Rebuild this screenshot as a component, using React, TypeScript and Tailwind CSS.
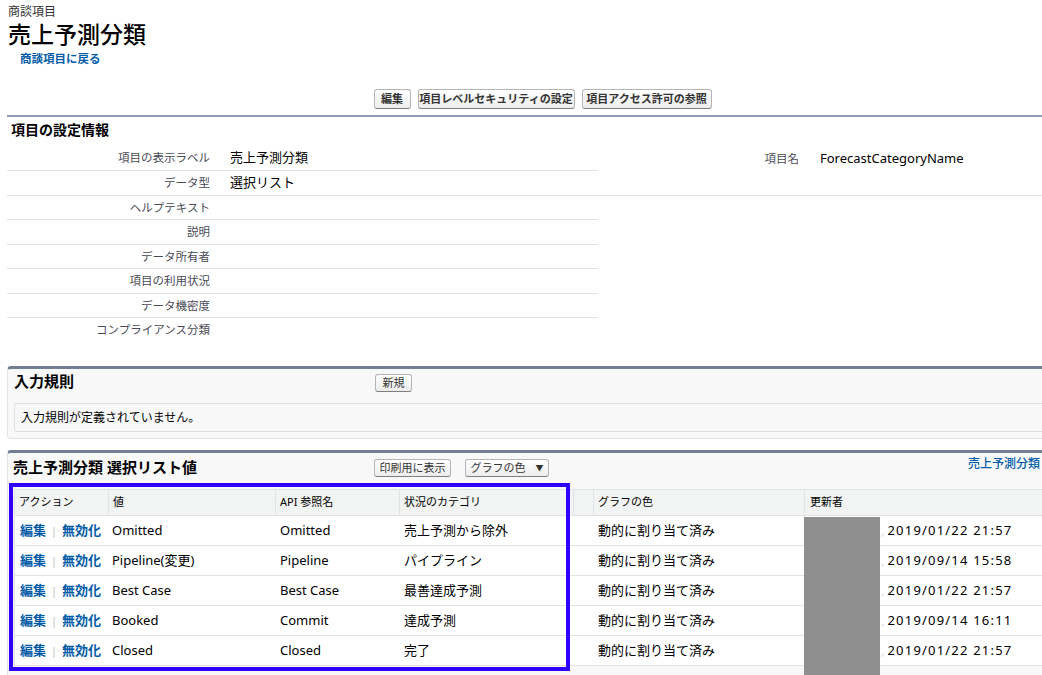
import React, { FC } from "react";

interface DetailRowProps {
  label: string;
  value?: string;
  height: string;
  border?: boolean;
}

const DetailRow: FC<DetailRowProps> = ({ label, value, height, border }) => {
  return (
    <div
      className={`flex items-center w-[591px] ${height} ${
        border ? "border-b border-[#e3e3e3]" : ""
      }`}
    >
      <div className="w-[213px] pr-[10px] text-right text-[11.5px] text-[#4a4a56]">
        {label}
      </div>
      <div className="pl-[10px] text-[13px] text-black">{value}</div>
    </div>
  );
};

const TopButton: FC<{ label: string; width: string }> = ({ label, width }) => (
  <button
    type="button"
    className={`${width} h-[20px] whitespace-nowrap rounded-[3px] border border-[#b5b5b5] border-b-[#7f7f7f] bg-gradient-to-b from-white to-[#ededed] text-[11px] font-bold text-[#333]`}
  >
    {label}
  </button>
);

const SmallButton: FC<{ children: React.ReactNode; width: string }> = ({
  children,
  width,
}) => (
  <button
    type="button"
    className={`${width} h-[18px] flex items-center justify-center whitespace-nowrap rounded-[3px] border border-[#b5b5b5] border-b-[#7f7f7f] bg-gradient-to-b from-white to-[#ededed] text-[11px] text-[#333]`}
  >
    {children}
  </button>
);

const picklist = [
  { value: "Omitted", api: "Omitted", cat: "売上予測から除外", date: "2019/01/22 21:57" },
  { value: "Pipeline(変更)", api: "Pipeline", cat: "パイプライン", date: "2019/09/14 15:58" },
  { value: "Best Case", api: "Best Case", cat: "最善達成予測", date: "2019/01/22 21:57" },
  { value: "Booked", api: "Commit", cat: "達成予測", date: "2019/09/14 16:11" },
  { value: "Closed", api: "Closed", cat: "完了", date: "2019/01/22 21:57" },
];

// column widths of the picklist table
const cols = ["w-[93px]", "w-[167px]", "w-[124px]", "w-[174px]", "w-[20px]", "w-[211px]"];

const App: FC = () => {
  return (
    <div className="relative w-[1042px] h-[675px] overflow-hidden bg-white font-['Noto_Sans','Noto_Sans_CJK_JP',sans-serif] text-black">
      <div className="ml-[7px] w-[1071px]">
        {/* page header */}
        <div className="pt-[4px] pl-[1px] text-[12px] leading-[16px] text-[#333]">
          商談項目
        </div>
        <h1 className="pl-[1px] text-[23px] leading-[28px] font-medium">
          売上予測分類
        </h1>
        <div className="mt-[4px] pl-[13px] text-[11.5px] leading-[14px] font-bold text-[#015ba7]">
          商談項目に戻る
        </div>

        <div className="mt-[23px] flex justify-center gap-[7px]">
          <TopButton label="編集" width="w-[37px]" />
          <TopButton label="項目レベルセキュリティの設定" width="w-[157px]" />
          <TopButton label="項目アクセス許可の参照" width="w-[130px]" />
        </div>

        {/* field detail */}
        <div className="mt-[6px] border-t-2 border-[#8e9dbd]">
          <div className="h-[29px] pt-[4px] pl-[4px] text-[14px] leading-[18px] font-bold">
            項目の設定情報
          </div>
          <div className="flex border-b border-[#e3e3e3]">
            <div className="w-[591px]">
              <DetailRow label="項目の表示ラベル" value="売上予測分類" height="h-[25px]" border />
              <DetailRow label="データ型" value="選択リスト" height="h-[24px]" />
            </div>
            <div className="flex h-[25px] items-center">
              <div className="w-[211px] pr-[10px] text-right text-[11.5px] text-[#4a4a56]">
                項目名
              </div>
              <div className="pl-[11px] text-[13px]">ForecastCategoryName</div>
            </div>
          </div>
          <DetailRow label="ヘルプテキスト" height="h-[24px]" border />
          <DetailRow label="説明" height="h-[25px]" border />
          <DetailRow label="データ所有者" height="h-[24px]" border />
          <DetailRow label="項目の利用状況" height="h-[25px]" border />
          <DetailRow label="データ機密度" height="h-[24px]" border />
          <DetailRow label="コンプライアンス分類" height="h-[24px]" />
        </div>

        {/* validation rules */}
        <div className="mt-[24px] rounded-[4px] border border-[#e3e3e3] border-t-[3px] border-t-[#747e96] bg-[#f8f8f8] pb-[6px]">
          <div className="flex h-[34px] items-start">
            <div className="w-[367px] pl-[6px] pt-[2px] text-[15px] leading-[20px] font-bold">
              入力規則
            </div>
            <div className="pt-[5px]">
              <SmallButton width="w-[37px]">新規</SmallButton>
            </div>
          </div>
          <div className="ml-[6px] flex h-[29px] items-center rounded-l-[3px] border border-r-0 border-[#e0e0e0] pl-[6px] text-[12px]">
            入力規則が定義されていません。
          </div>
        </div>

        {/* picklist values */}
        <div className="mt-[11px] rounded-t-[4px] border border-b-0 border-[#e3e3e3] border-t-[3px] border-t-[#747e96] bg-[#f8f8f8] h-[300px]">
          <div className="flex h-[36px] items-start">
            <div className="w-[366px] pl-[5px] pt-[4px] text-[15px] leading-[20px] font-bold">
              売上予測分類 選択リスト値
            </div>
            <div className="flex gap-[14px] pt-[6px]">
              <SmallButton width="w-[77px]">印刷用に表示</SmallButton>
              <SmallButton width="w-[84px]">
                <span>グラフの色</span>
                <span className="ml-[10px] text-[8px]">▼</span>
              </SmallButton>
            </div>
            <div className="ml-auto pr-[37px] pt-[2px] text-[12px] font-medium text-[#015ba7]">
              売上予測分類
            </div>
          </div>

          <div className="ml-[6px] border-l border-[#e0e3e5] bg-white">
            <div className="flex h-[27px] items-center border-y border-[#e0e3e5] bg-[#f2f3f3] text-[11px]">
              {["アクション", "値", "API 参照名", "状況のカテゴリ", "", "グラフの色"].map(
                (h, i) => (
                  <div
                    key={i}
                    className={`${cols[i]} h-full flex items-center pl-[4px] ${
                      i > 0 ? "border-l border-[#e0e3e5]" : ""
                    }`}
                  >
                    {h}
                  </div>
                )
              )}
              <div className="flex-1 h-full flex items-center pl-[5px] border-l border-[#e0e3e5]">
                更新者
              </div>
            </div>
            {picklist.map((row) => (
              <div
                key={row.date + row.value}
                className="flex h-[30px] items-center border-b border-[#e3e3e3] text-[13px]"
              >
                <div className={`${cols[0]} pl-[5px] font-bold text-[#015ba7] whitespace-nowrap`}>
                  編集
                  <span className="mx-[5px] text-[11px] font-normal text-[#bbb]">|</span>
                  無効化
                </div>
                <div className={`${cols[1]} pl-[4px]`}>{row.value}</div>
                <div className={`${cols[2]} pl-[5px]`}>{row.api}</div>
                <div className={`${cols[3]} pl-[5px]`}>{row.cat}</div>
                <div className={cols[4]} />
                <div className={`${cols[5]} pl-[5px]`}>動的に割り当て済み</div>
                <div className="flex-1 flex items-center pl-[6px] whitespace-nowrap">
                  <span className="w-[71px]" />
                  <span className="text-[#e0e0e0]">,</span>
                  <span className="ml-[3px] tracking-[1.2px]">{row.date}</span>
                </div>
              </div>
            ))}
          </div>
        </div>
      </div>

      {/* redacted user name */}
      <div className="absolute left-[804px] top-[517px] w-[76px] h-[158px] bg-[#8f8f8f]" />
      {/* highlight annotation */}
      <div className="absolute left-[9px] top-[483px] w-[561px] h-[188px] border-[4px] border-[#2f00ff]" />
    </div>
  );
};

export default App;
